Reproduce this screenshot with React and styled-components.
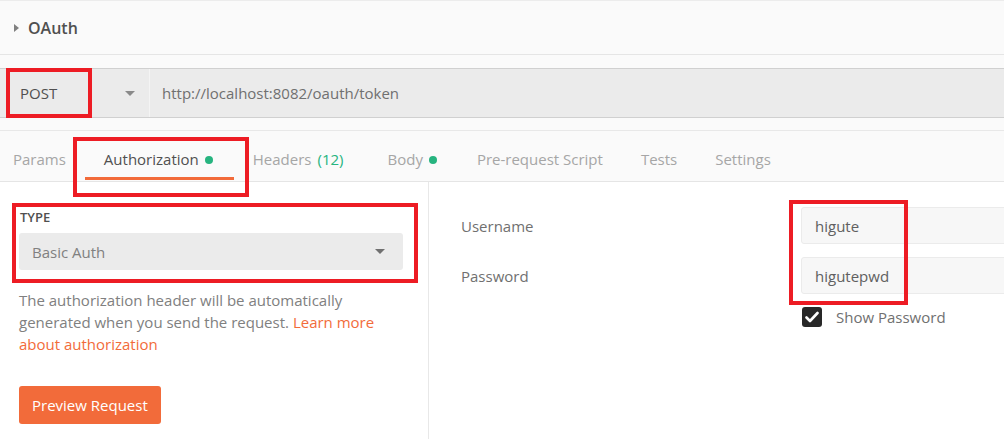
import styled, { createGlobalStyle } from "styled-components";

const GlobalStyle = createGlobalStyle`
    body {
        margin: 0;
        background: #fff;
        font-family: "Open Sans", "Liberation Sans", sans-serif;
        font-size: 15px;
        color: #707070;
    }
`

const Page = styled.div`
    position: relative;
    width: 1004px;
    height: 439px;
    overflow: hidden;
    background: #fff;
`
const Header = styled.div`
    height: 53px;
    display: flex;
    align-items: center;
    gap: 9px;
    padding-left: 14px;
    background: #fafafa;
    border-top: 1px solid #ececec;
    border-bottom: 1px solid #e5e5e5;
    .caret {
        width: 0;
        height: 0;
        border-top: 4px solid transparent;
        border-bottom: 4px solid transparent;
        border-left: 5px solid #808080;
        margin-top: 1px;
    }
    .title {
        font-size: 16px;
        font-weight: 600;
        color: #505050;
    }
`
const UrlSection = styled.div`
    background: #fafafa;
    padding: 13px 0 12px;
`
const UrlBar = styled.div`
    height: 48px;
    display: flex;
    background: #ebebeb;
    border-top: 1px solid #d0d0d0;
    border-bottom: 1px solid #d0d0d0;
`
const MethodSelect = styled.div`
    width: 150px;
    display: flex;
    align-items: center;
    justify-content: space-between;
    padding: 0 14px 0 20px;
    box-sizing: border-box;
    border-right: 1px solid #f4f4f4;
    color: #505050;
`
const Arrow = styled.span`
    width: 0;
    height: 0;
    border-left: 5px solid transparent;
    border-right: 5px solid transparent;
    border-top: 5px solid ${({ color }) => color || "#808080"};
`
const UrlText = styled.div`
    display: flex;
    align-items: center;
    padding-left: 12px;
    color: #707070;
`
const TabRow = styled.div`
    height: 52px;
    box-sizing: border-box;
    display: flex;
    gap: 38px;
    padding: 0 0 0 13px;
    background: #fafafa;
    border-top: 1px solid #e8e8e8;
    border-bottom: 1px solid #e5e5e5;
`
const Tab = styled.div`
    position: relative;
    height: 100%;
    display: flex;
    align-items: center;
    padding-top: 6px;
    box-sizing: border-box;
    gap: 6px;
    color: ${({ active }) => (active ? "#505050" : "#a6a6a6")};
    &::after {
        content: "";
        display: ${({ active }) => (active ? "block" : "none")};
        position: absolute;
        left: -19px;
        right: -19px;
        bottom: 1px;
        height: 3px;
        background: #f26b3a;
    }
    .count {
        color: #26b47f;
        margin-right: 6px;
    }
`
const Dot = styled.span`
    width: 8px;
    height: 8px;
    border-radius: 50%;
    background: #26b47f;
    margin: 1px 2px 0 0;
`
const Body = styled.div`
    display: flex;
    height: 258px;
`
const LeftPane = styled.div`
    width: 429px;
    box-sizing: border-box;
    padding: 27px 25px 0 19px;
    border-right: 1px solid #e8e8e8;
`
const TypeLabel = styled.div`
    font-size: 13px;
    line-height: 16px;
    font-weight: 600;
    color: #505050;
    padding-left: 1px;
`
const TypeSelect = styled.div`
    margin-top: 8px;
    height: 37px;
    display: flex;
    align-items: center;
    justify-content: space-between;
    padding: 0 18px 0 13px;
    border-radius: 3px;
    background: #ebebeb;
    color: #808080;
`
const Help = styled.p`
    margin: 19px 0 0;
    line-height: 22px;
    color: #808080;
    a {
        color: #f26b3a;
        text-decoration: none;
    }
`
const PreviewButton = styled.button`
    margin-top: 31px;
    height: 38px;
    padding: 0 13px;
    border: none;
    border-radius: 3px;
    background: #f26b3a;
    color: #fff;
    font-family: inherit;
    font-size: 15px;
    font-weight: 500;
`
const RightPane = styled.div`
    flex: 1;
    padding: 25px 0 0 32px;
    display: flex;
    flex-direction: column;
    gap: 13px;
`
const FieldRow = styled.div`
    display: flex;
    align-items: center;
    label {
        width: 340px;
        flex-shrink: 0;
        color: #707070;
    }
`
const Input = styled.div`
    flex: 1;
    height: 35px;
    display: flex;
    align-items: center;
    padding-left: 13px;
    margin-right: -20px;
    border: 1px solid #ebebeb;
    border-radius: 3px;
    background: #f7f7f7;
    color: #606060;
`
const CheckRow = styled.div`
    display: flex;
    align-items: center;
    gap: 14px;
    margin-left: 341px;
    color: #707070;
`
const Checkbox = styled.span`
    width: 20px;
    height: 20px;
    border-radius: 3px;
    background: #282828;
    display: flex;
    align-items: center;
    justify-content: center;
`
const Mark = styled.div`
    position: absolute;
    left: ${({ x }) => x}px;
    top: ${({ y }) => y}px;
    width: ${({ w }) => w}px;
    height: ${({ h }) => h}px;
    box-sizing: border-box;
    border: 4px solid #ed1c24;
    pointer-events: none;
`

const tabs = [
    { name: "Params" },
    { name: "Authorization", dot: true, active: true },
    { name: "Headers", count: "(12)" },
    { name: "Body", dot: true },
    { name: "Pre-request Script" },
    { name: "Tests" },
    { name: "Settings" },
];

const App = () => {
    return (
        <Page>
            <GlobalStyle />
            <Header>
                <span className="caret" />
                <span className="title">OAuth</span>
            </Header>
            <UrlSection>
                <UrlBar>
                    <MethodSelect>
                        POST
                        <Arrow color="#8a8a8a" />
                    </MethodSelect>
                    <UrlText>http://localhost:8082/oauth/token</UrlText>
                </UrlBar>
            </UrlSection>
            <TabRow>
                {tabs.map((t) => (
                    <Tab key={t.name} active={t.active}>
                        {t.name}
                        {t.count && <span className="count">{t.count}</span>}
                        {t.dot && <Dot />}
                    </Tab>
                ))}
            </TabRow>
            <Body>
                <LeftPane>
                    <TypeLabel>TYPE</TypeLabel>
                    <TypeSelect>
                        Basic Auth
                        <Arrow color="#707070" />
                    </TypeSelect>
                    <Help>
                        The authorization header will be automatically generated when you send the request.{" "}
                        <a href="#">Learn more about authorization</a>
                    </Help>
                    <PreviewButton>Preview Request</PreviewButton>
                </LeftPane>
                <RightPane>
                    <FieldRow>
                        <label>Username</label>
                        <Input>higute</Input>
                    </FieldRow>
                    <FieldRow>
                        <label>Password</label>
                        <Input>higutepwd</Input>
                    </FieldRow>
                    <CheckRow>
                        <Checkbox>
                            <svg width="14" height="12" viewBox="0 0 14 12">
                                <path d="M1.5 6.5 L5 10 L12.5 2" fill="none" stroke="#fff" strokeWidth="2.6" strokeLinecap="round" strokeLinejoin="round" />
                            </svg>
                        </Checkbox>
                        Show Password
                    </CheckRow>
                </RightPane>
            </Body>
            <Mark x={6} y={68} w={86} h={50} />
            <Mark x={73} y={137} w={176} h={60} />
            <Mark x={12} y={203} w={406} h={80} />
            <Mark x={789} y={200} w={119} h={105} />
        </Page>
    );
};

export default App;
